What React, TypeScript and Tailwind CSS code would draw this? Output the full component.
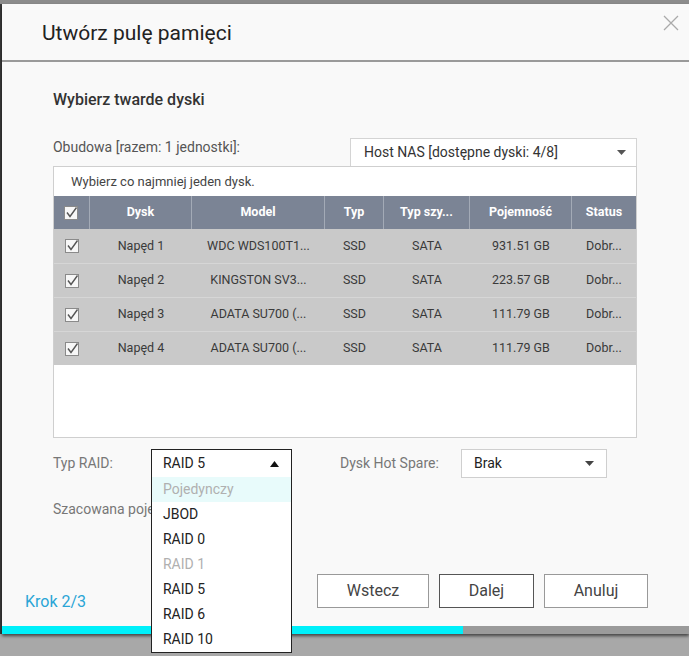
import React from "react";

const Check = () => (
  <svg width="14" height="14" viewBox="0 0 14 14" className="block">
    <rect x="0.5" y="0.5" width="13" height="13" fill="#f7f7f7" stroke="#8a8a8a" />
    <path d="M3 6.5 L6 10.5 L12.5 1.5" fill="none" stroke="#555" strokeWidth="1.4" />
  </svg>
);

const cols = ["w-[36px]", "w-[102px]", "w-[133px]", "w-[59px]", "w-[86px]", "w-[102px]", "w-[64px]"];

const rows = [
  ["Napęd 1", "WDC WDS100T1...", "SSD", "SATA", "931.51 GB", "Dobr..."],
  ["Napęd 2", "KINGSTON SV3...", "SSD", "SATA", "223.57 GB", "Dobr..."],
  ["Napęd 3", "ADATA SU700 (...", "SSD", "SATA", "111.79 GB", "Dobr..."],
  ["Napęd 4", "ADATA SU700 (...", "SSD", "SATA", "111.79 GB", "Dobr..."],
];

const headers = ["Dysk", "Model", "Typ", "Typ szy...", "Pojemność", "Status"];

const raidOptions: { label: string; dim?: boolean; hl?: boolean }[] = [
  { label: "Pojedynczy", dim: true, hl: true },
  { label: "JBOD" },
  { label: "RAID 0" },
  { label: "RAID 1", dim: true },
  { label: "RAID 5" },
  { label: "RAID 6" },
  { label: "RAID 10" },
];

export default function App() {
  return (
    <div
      className="relative w-[689px] h-[656px] overflow-hidden bg-[#a8a8a8]"
      style={{ fontFamily: "Roboto, 'Liberation Sans', sans-serif" }}
    >
      <div className="h-[4px] bg-[#8c8c8c]" />
      <div className="flex">
        <div className="w-[2px] h-[630px] bg-[#3a3a3a]" />
        <div className="relative w-[700px] h-[630px] bg-[#f9f9f9] flex flex-col shadow-[0_2px_3px_rgba(0,0,0,0.6)]">
          {/* Header */}
          <div className="h-[56px] flex items-center pl-[40px] shrink-0">
            <span className="text-[21px] text-[#222] mt-[4px]">Utwórz pulę pamięci</span>
          </div>
          <svg className="absolute left-[661px] top-[11px]" width="16" height="16" viewBox="0 0 16 16">
            <path d="M1 1 L15 15 M15 1 L1 15" stroke="#aaa" strokeWidth="1.3" />
          </svg>
          <div className="h-[2px] bg-[#9a9a9a] shrink-0" />

          {/* Body */}
          <div className="pl-[51px] flex flex-col flex-1">
            <div className="mt-[28px] h-[20px] flex items-center text-[16px] font-medium text-[#333]">
              Wybierz twarde dyski
            </div>
            <div className="mt-[27px] flex items-end w-[584px]">
              <div className="flex-1 text-[14px] text-[#555] pb-[8px]">Obudowa [razem: 1 jednostki]:</div>
              <div className="w-[287px] h-[28px] bg-white border border-[#d4d4d4] border-b-0 flex items-center pl-[13px] pr-[10px]">
                <span className="flex-1 text-[14px] text-[#333]">Host NAS [dostępne dyski: 4/8]</span>
                <svg width="9" height="6" viewBox="0 0 9 6"><path d="M0 0 L9 0 L4.5 5 Z" fill="#555" /></svg>
              </div>
            </div>
            {/* Table box */}
            <div className="w-[584px] h-[272px] border border-[#cfcfcf] bg-white flex flex-col">
              <div className="h-[29px] flex items-center pl-[17px] text-[13px] text-[#444]">
                Wybierz co najmniej jeden dysk.
              </div>
              <div className="h-[33px] flex bg-[#7b8495] text-white text-[12.5px] font-bold">
                <div className={`${cols[0]} flex items-center justify-center border-r border-[#a3aab6]`}>
                  <Check />
                </div>
                {headers.map((h, i) => (
                  <div
                    key={h}
                    className={`${cols[i + 1]} flex items-center justify-center ${i < headers.length - 1 ? "border-r border-[#a3aab6]" : ""}`}
                  >
                    {h}
                  </div>
                ))}
              </div>
              {rows.map((r, ri) => (
                <div
                  key={ri}
                  className={`h-[34px] flex bg-[#c9c9c9] text-[12.5px] text-[#3a3a3a] ${ri > 0 ? "border-t border-[#d6d6d6]" : ""}`}
                >
                  <div className={`${cols[0]} flex items-center justify-center`}>
                    <Check />
                  </div>
                  {r.map((c, i) => (
                    <div key={i} className={`${cols[i + 1]} flex items-center justify-center`}>
                      {c}
                    </div>
                  ))}
                </div>
              ))}
            </div>

            {/* RAID row */}
            <div className="mt-[11px] h-[29px] flex items-center relative">
              <div className="w-[98px] text-[14px] text-[#777]">Typ RAID:</div>
              <div className="relative w-[141px] h-[29px] bg-white border border-[#222] flex items-center pl-[11px] pr-[12px]">
                <span className="flex-1 text-[14px] text-[#222]">RAID 5</span>
                <svg width="9" height="6" viewBox="0 0 9 6"><path d="M0 6 L9 6 L4.5 0 Z" fill="#111" /></svg>
                <div className="absolute left-[-1px] top-[27px] w-[141px] bg-white border border-[#222] border-t-0 z-10">
                  {raidOptions.map((o) => (
                    <div
                      key={o.label}
                      className={`h-[25px] flex items-center pl-[11px] text-[14px] ${o.hl ? "bg-[#e8fbfb]" : ""} ${o.dim ? "text-[#b0b0b0]" : "text-[#222]"}`}
                    >
                      {o.label}
                    </div>
                  ))}
                </div>
              </div>
              <div className="ml-[48px] w-[121px] text-[14px] text-[#777]">Dysk Hot Spare:</div>
              <div className="w-[146px] h-[29px] bg-white border border-[#cfcfcf] flex items-center pl-[12px] pr-[12px]">
                <span className="flex-1 text-[14px] text-[#222]">Brak</span>
                <svg width="9" height="6" viewBox="0 0 9 6"><path d="M0 0 L9 0 L4.5 5 Z" fill="#444" /></svg>
              </div>
            </div>
            <div className="mt-[21px] text-[14px] text-[#777]">Szacowana pojemność:</div>
          </div>

          {/* Footer */}
          <div className="h-[58px] flex items-start shrink-0">
            <div className="pl-[23px] pt-[20px] text-[16px] text-[#2aa5d6] w-[315px]">Krok 2/3</div>
            <div className="flex gap-[10px] pt-[4px]">
              <button className="w-[112px] h-[34px] bg-white border border-[#999] text-[16px] text-[#444]">Wstecz</button>
              <button className="w-[95px] h-[34px] bg-white border border-[#555] text-[16px] text-[#444]">Dalej</button>
              <button className="w-[104px] h-[34px] bg-white border border-[#999] text-[16px] text-[#444]">Anuluj</button>
            </div>
          </div>
          <div className="h-[8px] flex shrink-0 mt-[-2px]">
            <div className="w-[461px] bg-[#00f0fa]" />
            <div className="flex-1 bg-[#9b9b9b]" />
          </div>
        </div>
      </div>
    </div>
  );
}
